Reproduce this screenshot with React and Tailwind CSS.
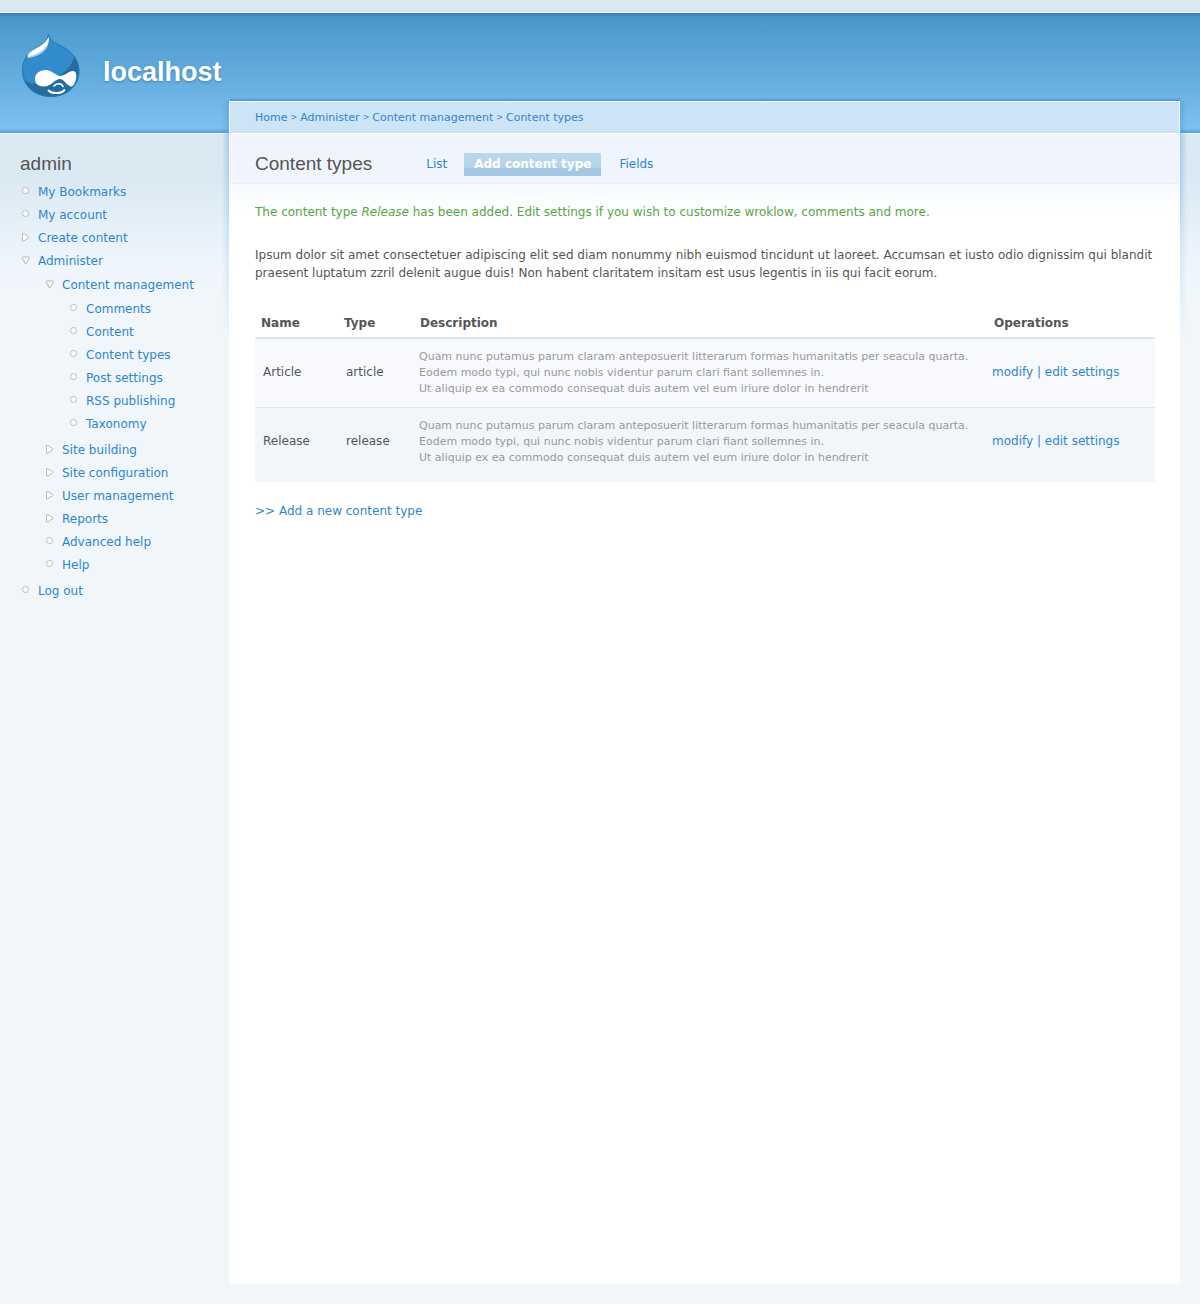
import React from 'react';

const menu = [
    { label: 'My Bookmarks', type: 'leaf' },
    { label: 'My account', type: 'leaf' },
    { label: 'Create content', type: 'collapsed' },
    {
        label: 'Administer',
        type: 'expanded',
        children: [
            {
                label: 'Content management',
                type: 'expanded',
                children: [
                    { label: 'Comments', type: 'leaf' },
                    { label: 'Content', type: 'leaf' },
                    { label: 'Content types', type: 'leaf' },
                    { label: 'Post settings', type: 'leaf' },
                    { label: 'RSS publishing', type: 'leaf' },
                    { label: 'Taxonomy', type: 'leaf' }
                ]
            },
            { label: 'Site building', type: 'collapsed' },
            { label: 'Site configuration', type: 'collapsed' },
            { label: 'User management', type: 'collapsed' },
            { label: 'Reports', type: 'collapsed' },
            { label: 'Advanced help', type: 'leaf' },
            { label: 'Help', type: 'leaf' }
        ]
    },
    { label: 'Log out', type: 'leaf' }
];

const breadcrumb = ['Home', 'Administer', 'Content management', 'Content types'];

const contentTypes = [
    { name: 'Article', type: 'article' },
    { name: 'Release', type: 'release' }
];

const Bullet = ({ type }) => (
    <svg width="9" height="9" viewBox="0 0 9 9" fill="#fff" stroke="#b9b9b9" className="shrink-0" aria-hidden="true">
        {type === 'leaf' && <circle cx="4.500" cy="3.500" r="3" />}
        {type === 'collapsed' && <path d="M1.500 .6 H3 L7.800 3.600 V4.600 L3 7.900 H1.500 Z" strokeLinejoin="round" />}
        {type === 'expanded' && <path d="M1.500 1 H8 V2.500 L5.500 7.500 H4 L1.500 2.500 Z" strokeLinejoin="round" />}
    </svg>
);

const MenuList = ({ items, nested }) => (
    <ul className={nested ? 'pl-6 pt-px pb-[3px]' : ''}>
        {items.map((item) => (
            <li key={item.label}>
                <div className="flex items-center gap-2 h-[23px]">
                    <Bullet type={item.type} />
                    <a href="#" className="whitespace-nowrap hover:underline">{item.label}</a>
                </div>
                {item.children && <MenuList items={item.children} nested />}
            </li>
        ))}
    </ul>
);

const Logo = () => (
    <svg width="60" height="66" viewBox="0 0 60 66" className="shrink-0" role="img" aria-label="Logo">
        <defs>
            <clipPath id="drop">
                <path d="M27.5 1 C29 9 36 10.500 43 14.500 C52 20 58 27.500 58 38 C58 53 46 63.500 30 63.500 C13.500 63.500 1.500 53 1.500 37 C1.500 27 6.500 20 14 15.500 C20.500 11.500 26.500 9 27.500 1 Z" />
            </clipPath>
        </defs>
        <g clipPath="url(#drop)">
            <rect width="60" height="66" fill="#328bcb" />
            <path d="M53 20 C53 31 46 37 38 43 C28 49 20 54 6 49 L2 44 C6 60 17 66 30 66 H60 V20 Z" fill="#266d9f" />
        </g>
        <path d="M27.5 1 C29 9 36 10.500 43 14.500 C52 20 58 27.500 58 38 C58 53 46 63.500 30 63.500 C13.500 63.500 1.500 53 1.500 37 C1.500 27 6.500 20 14 15.500 C20.500 11.500 26.500 9 27.500 1 Z" fill="none" stroke="#2777b3" strokeWidth="1" />
        <path d="M27.500 4 C28.500 9 27 16 21 20 C16 23 12 24 8 25 C6 25 6 22 8 20 C14 14 24 13 27.500 4 Z" fill="#a9d0ea" />
        <path d="M27.500 4 C28.500 9 26 14 20 18 C15 21.500 12 22 7 24 C6 17 24 14 27.500 4 Z" fill="#fff" />
        <path d="M25 37 C31 37 35 43 39 43 C43.500 43 48 38 52 38 C55 38 56 42 55 46 C54 51 52 53.500 50 53.500 C46 53 43 46 39 46 C34 46 30 53.500 23 53.500 C17 53.500 14 50.500 14 46 C14 40.500 18.500 37 25 37 Z" fill="#fff" />
        <path d="M33 53 C35 50 40.500 50 42 53.500" fill="none" stroke="#fff" strokeWidth="1.600" strokeLinecap="round" />
        <path d="M27.500 57.500 C31 61 40 61 43.500 57" fill="none" stroke="#fff" strokeWidth="1.900" strokeLinecap="round" />
    </svg>
);

const App = () => {
    return (
        <div className="min-h-screen flex flex-col bg-[#f0f6fa] text-[#555] text-[12px] font-['Verdana','DejaVu_Sans',sans-serif]">
            <div className="h-3 bg-[#dae8f2]" />
            <header className="h-[122px] border-y border-white bg-[linear-gradient(to_bottom,#3a79b8_0,#3f86c4_2px,#4a97cc_4px,#62abdd_60px,#7cc0f0_115px,#6fb6ec_117px,#4a9be0_120px)] pl-[21px] pt-5 flex items-start gap-[22px]">
                <Logo />
                <h1 className="pt-6 text-[27px] leading-[30px] font-bold text-white font-['Liberation_Sans',Arial,sans-serif] [text-shadow:0_1px_3px_#3a80b8]">
                    localhost
                </h1>
            </header>

            <div className="grow flex bg-[linear-gradient(to_bottom,#dae8f2_0,#dae8f2_40px,#e1eef6_75px,#eff5fd_130px,#f0f6fa_150px)]">
                <aside className="w-[229px] shrink-0 pl-5 pt-[18px] text-[#2f86cc]">
                    <h2 className="text-[19px] leading-6 mb-1 text-[#555] font-['Liberation_Sans',Arial,sans-serif]">admin</h2>
                    <nav className="pl-px">
                        <MenuList items={menu} />
                    </nav>
                </aside>

                <main className="relative grow min-w-0 -mt-[33px] mr-5 mb-5 bg-white border-l border-white">
                    {/* soft side shadows that fade out further down the panel */}
                    <div className="absolute top-0 -left-[8px] w-[7px] h-60 bg-linear-to-l from-[#4a9bd8]/45 to-transparent [mask-image:linear-gradient(to_bottom,#000,transparent)]" />
                    <div className="absolute top-0 -right-[7px] w-[7px] h-60 bg-linear-to-r from-[#4a9bd8]/45 to-transparent [mask-image:linear-gradient(to_bottom,#000,transparent)]" />
                    <div className="absolute -top-[3px] left-0 right-0 h-[3px] bg-linear-to-t from-[#3f8fdb] to-transparent" />

                    <nav aria-label="Breadcrumb" className="h-[33px] border border-l-0 border-white bg-[#cde4f7] pl-[25px] pt-px flex items-center gap-[3px] text-[11px] text-[#2f86cc]">
                        {breadcrumb.map((item, i) => (
                            <React.Fragment key={item}>
                                {i > 0 && <span className="text-[8px]">&gt;</span>}
                                <a href="#" className="hover:underline">{item}</a>
                            </React.Fragment>
                        ))}
                    </nav>

                    <div className="h-[50px] pt-[18px] pl-[25px] flex items-start bg-[#f0f5fd] border-b border-[#e9eff5]">
                        <h2 className="text-[19px] leading-6 font-['Liberation_Sans',Arial,sans-serif]">Content types</h2>
                        <div className="flex mt-px ml-11 leading-[23px] text-[#2f86cc]">
                            <a href="#" className="px-[10px]">List</a>
                            <a href="#" className="px-[10px] mx-[7px] font-bold text-white bg-[linear-gradient(to_bottom,#bbd8eb_0,#b5d4e9_60%,#a3c7e3_70%,#a3c7e3_100%)]">
                                Add content type
                            </a>
                            <a href="#" className="px-[11px]">Fields</a>
                        </div>
                    </div>

                    <div className="px-[25px] pt-[19px] bg-[linear-gradient(to_bottom,#f6fafd_0,#fff_30px)]">
                        <p className="leading-[18px] text-[#55a546]">
                            The content type <em>Release</em> has been added. Edit settings if you wish to customize wroklow, comments and more.
                        </p>
                        <p className="mt-[25px] leading-[18px]">
                            Ipsum dolor sit amet consectetuer adipiscing elit sed diam nonummy nibh euismod tincidunt ut laoreet. Accumsan et iusto odio dignissim qui blandit praesent luptatum zzril delenit augue duis! Non habent claritatem insitam est usus legentis in iis qui facit eorum.
                        </p>

                        <table className="w-full mt-7 table-fixed border-collapse text-left">
                            <colgroup>
                                <col className="w-[83px]" />
                                <col className="w-[76px]" />
                                <col />
                                <col className="w-[167px]" />
                            </colgroup>
                            <thead>
                                <tr className="h-7 border-b-2 border-[#dae8f2]">
                                    <th className="pl-[6px] pb-px">Name</th>
                                    <th className="pl-[6px] pb-px">Type</th>
                                    <th className="pl-[6px] pb-px">Description</th>
                                    <th className="pl-[6px] pb-px">Operations</th>
                                </tr>
                            </thead>
                            <tbody>
                                {contentTypes.map((row) => (
                                    <tr key={row.type} className="border-b border-[#dae8f2] bg-[#f8f9fd] align-top leading-[18px] last:border-b-0 last:bg-[#f1f6fb] last:h-[74px]">
                                        <td className="pl-2 pt-6">{row.name}</td>
                                        <td className="pl-2 pt-6">{row.type}</td>
                                        <td className="pl-[5px] py-[10px] text-[11px] leading-4 text-[#999]">
                                            Quam nunc putamus parum claram anteposuerit litterarum formas humanitatis per seacula quarta.<br />
                                            Eodem modo typi, qui nunc nobis videntur parum clari fiant sollemnes in.<br />
                                            Ut aliquip ex ea commodo consequat duis autem vel eum iriure dolor in hendrerit
                                        </td>
                                        <td className="pl-1 pt-6 text-[#2f86cc]">
                                            <a href="#" className="hover:underline">modify</a> | <a href="#" className="hover:underline">edit settings</a>
                                        </td>
                                    </tr>
                                ))}
                            </tbody>
                        </table>

                        <a href="#" className="inline-block mt-5 leading-[18px] text-[#2f86cc] hover:underline">
                            &gt;&gt; Add a new content type
                        </a>
                    </div>
                </main>
            </div>
        </div>
    );
};

export default App;
